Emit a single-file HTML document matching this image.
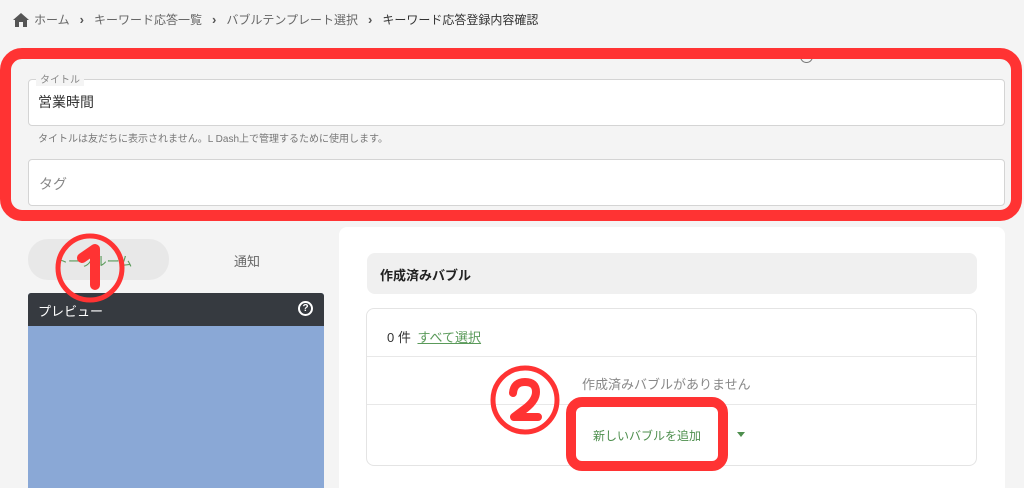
<!DOCTYPE html>
<html><head><meta charset="utf-8"><style>
*{box-sizing:border-box;margin:0;padding:0}
html,body{width:1024px;height:488px;overflow:hidden}
body{background:#f4f4f4;font-family:"Liberation Sans","Noto Sans CJK JP",sans-serif;position:relative;color:#333}
.a{position:absolute}
.bc{top:11px;left:13px;font-size:12px;color:#666;display:flex;align-items:center;white-space:nowrap}
.bc .s{margin:0 10px;font-weight:bold;color:#555;font-size:13px}
.inp{background:#fff;border:1px solid #d4d4d4;border-radius:4px}
</style></head><body>
<div class="a bc"><svg width="16" height="14" viewBox="0 0 16 14"><path d="M8 0L0 7h2v7h4V9h4v5h4V7h2z" fill="#555"/></svg><span style="margin-left:5px">ホーム</span><span class="s">›</span>キーワード応答一覧<span class="s">›</span>バブルテンプレート選択<span class="s">›</span><span style="color:#333">キーワード応答登録内容確認</span></div>

<div class="a" style="left:800px;top:50px;width:13px;height:13px;border:1.5px solid #777;border-radius:50%"></div>
<div class="a inp" style="left:28px;top:79px;width:977px;height:47px"></div>
<div class="a" style="left:36px;top:71px;background:#f4f4f4;padding:0 4px;font-size:10px;color:#888">タイトル</div>
<div class="a" style="left:38px;top:92px;font-size:14px;color:#333">営業時間</div>
<div class="a" style="left:38px;top:130px;font-size:10px;color:#777">タイトルは友だちに表示されません。L Dash上で管理するために使用します。</div>
<div class="a inp" style="left:28px;top:159px;width:977px;height:47px"></div>
<div class="a" style="left:39px;top:174px;font-size:14px;color:#888">タグ</div>
<div class="a" style="left:0;top:48px;width:1022px;height:173px;border:11px solid #ff3333;border-radius:22px"></div>

<div class="a" style="left:28px;top:239px;width:141px;height:41px;background:#e8e8e8;border-radius:20px"></div>
<div class="a" style="left:55px;top:251px;font-size:13px;color:#5a9a5a">トークルーム</div>
<div class="a" style="left:234px;top:251px;font-size:13px;color:#666">通知</div>
<div class="a" style="left:28px;top:293px;width:296px;height:200px;background:#8aa8d6;border-radius:3px 3px 0 0;overflow:hidden"><div style="height:33px;background:#363a40;color:#fff;font-size:13px;padding:8px 10px;position:relative">プレビュー<span style="position:absolute;right:11px;top:8px;width:15px;height:15px;border:2px solid #fff;border-radius:50%;font-size:10px;line-height:11px;text-align:center;font-weight:bold">?</span></div></div>
<svg class="a" style="left:53px;top:232px" width="74" height="74"><circle cx="37" cy="36" r="32" fill="none" stroke="#ff3333" stroke-width="5"/><path d="M29 26 L42 17 L42 53" fill="none" stroke="#ff3333" stroke-width="10" stroke-linecap="round" stroke-linejoin="round"/></svg>

<div class="a" style="left:339px;top:227px;width:666px;height:280px;background:#fff;border-radius:8px"></div>
<div class="a" style="left:367px;top:253px;width:610px;height:41px;background:#f0f0f0;border-radius:8px;font-size:13px;font-weight:bold;padding:12px 13px;color:#222">作成済みバブル</div>
<div class="a" style="left:366px;top:308px;width:611px;height:158px;border:1px solid #e4e4e4;border-radius:8px"></div>
<div class="a" style="left:367px;top:356px;width:609px;height:1px;background:#e8e8e8"></div>
<div class="a" style="left:367px;top:404px;width:609px;height:1px;background:#e8e8e8"></div>
<div class="a" style="left:387px;top:327px;font-size:13px;color:#333">0 件 <span style="color:#5a9a5a;text-decoration:underline;margin-left:3px">すべて選択</span></div>
<div class="a" style="left:582px;top:374px;font-size:13px;color:#888">作成済みバブルがありません</div>
<div class="a" style="left:593px;top:427px;font-size:12px;color:#4e8f4e">新しいバブルを追加</div>
<div class="a" style="left:737px;top:432px;width:0;height:0;border-left:4px solid transparent;border-right:4px solid transparent;border-top:5px solid #4e8f4e"></div>
<div class="a" style="left:566px;top:397px;width:162px;height:74px;border:10px solid #ff3333;border-radius:16px"></div>
<svg class="a" style="left:488px;top:363px" width="74" height="74"><circle cx="37" cy="37" r="32" fill="none" stroke="#ff3333" stroke-width="5"/><path d="M25 30 Q26 19 37 19 Q48 19 48 29 Q48 37 38 45 L26 54 L50 54" fill="none" stroke="#ff3333" stroke-width="8" stroke-linecap="round" stroke-linejoin="round"/></svg>
</body></html>
